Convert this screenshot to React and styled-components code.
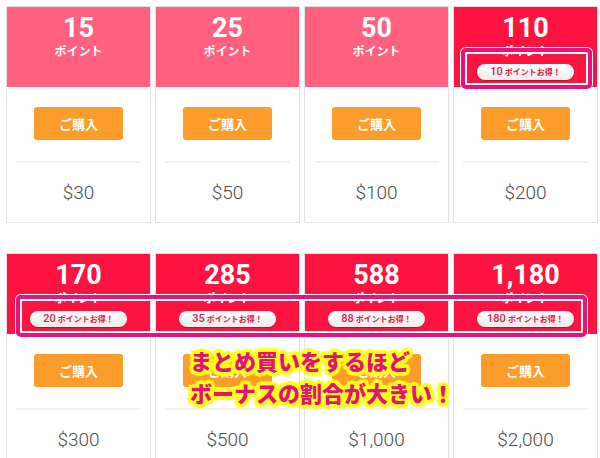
import React from 'react';
import styled, { createGlobalStyle } from 'styled-components';

const GlobalStyle = createGlobalStyle`
  body {
    margin: 0;
    background: #fff;
    font-family: Roboto, "Noto Sans CJK JP", sans-serif;
  }
`;

const Page = styled.div`
  position: relative;
  width: 600px;
  height: 458px;
  overflow: hidden;
  padding: 6px 0 0 6px;
  box-sizing: border-box;
`;

const Grid = styled.div`
  display: grid;
  grid-template-columns: repeat(4, 145px);
  column-gap: 4px;
  row-gap: 30px;
`;

const Card = styled.div`
  border: 1px solid #e2e2e2;
  background: #fff;
  display: flex;
  flex-direction: column;
  height: 215px;
`;

const Header = styled.div`
  height: 80px;
  background: ${(p) => (p.$bonus ? '#fd133f' : '#ff617f')};
  color: #fff;
  display: flex;
  flex-direction: column;
  align-items: center;
  padding-top: 6px;
  box-sizing: border-box;
`;

const Amount = styled.div`
  font-size: 27px;
  font-weight: 700;
  line-height: 30px;
`;

const Unit = styled.div`
  font-family: "Noto Sans CJK JP", sans-serif;
  font-size: 12px;
  font-weight: 700;
  line-height: 16px;
`;

const Badge = styled.div`
  margin-top: 5px;
  width: 97px;
  height: 16px;
  border-radius: 8px;
  background: linear-gradient(#ffffff, #ececec);
  box-shadow: 0 1px 1px rgba(0, 0, 0, 0.25);
  color: #d42048;
  display: flex;
  align-items: center;
  justify-content: center;
  gap: 2px;
  font-family: "Noto Sans CJK JP", sans-serif;
  font-size: 8px;
  font-weight: 700;
  line-height: 16px;
  b {
    font-family: Roboto, sans-serif;
    font-size: 11px;
    font-weight: 500;
  }
`;

const Body = styled.div`
  display: flex;
  flex-direction: column;
  align-items: center;
  padding: 20px 9px 0;
`;

const BuyButton = styled.button`
  width: 89px;
  height: 33px;
  border: none;
  border-radius: 3px;
  background: #fb9c2b;
  color: #fff;
  font-family: "Noto Sans CJK JP", sans-serif;
  font-size: 13px;
  font-weight: 700;
  padding: 0;
`;

const Divider = styled.div`
  align-self: stretch;
  height: 2px;
  background: #f1f1f1;
  margin-top: 21px;
`;

const Price = styled.div`
  margin-top: 18px;
  font-size: 19px;
  font-weight: 300;
  color: #4a4a4a;
  line-height: 24px;
`;

const Highlight = styled.div`
  position: absolute;
  left: ${(p) => p.$x}px;
  top: ${(p) => p.$y}px;
  width: ${(p) => p.$w}px;
  height: ${(p) => p.$h}px;
  box-sizing: border-box;
  border: 4px solid #e8127f;
  border-radius: 5px;
  box-shadow: inset 0 0 0 2px #fff, 0 0 0 1px #fff;
`;

const Callout = styled.div`
  position: absolute;
  left: 190px;
  top: 344px;
  font-family: "Noto Sans CJK JP", sans-serif;
  font-size: 22px;
  font-weight: 900;
  line-height: 32px;
  color: #e3127b;
  white-space: pre;
  text-shadow:
    4px 0 1px #ffff1a, -4px 0 1px #ffff1a, 0 4px 1px #ffff1a, 0 -4px 1px #ffff1a,
    3px 3px 1px #ffff1a, -3px 3px 1px #ffff1a, 3px -3px 1px #ffff1a, -3px -3px 1px #ffff1a,
    2px 0 0 #ffff1a, -2px 0 0 #ffff1a, 0 2px 0 #ffff1a, 0 -2px 0 #ffff1a,
    0 0 5px #ffff1a, 0 0 5px #ffff1a;
`;

const plans = [
  { pts: '15', price: '$30' },
  { pts: '25', price: '$50' },
  { pts: '50', price: '$100' },
  { pts: '110', price: '$200', bonus: '10' },
  { pts: '170', price: '$300', bonus: '20' },
  { pts: '285', price: '$500', bonus: '35' },
  { pts: '588', price: '$1,000', bonus: '88' },
  { pts: '1,180', price: '$2,000', bonus: '180' },
];

const App = () => {
  return (
    <Page>
      <GlobalStyle />
      <Grid>
        {plans.map((p) => (
          <Card key={p.pts}>
            <Header $bonus={!!p.bonus}>
              <Amount>{p.pts}</Amount>
              <Unit>ポイント</Unit>
              {p.bonus && (
                <Badge>
                  <b>{p.bonus}</b>ポイントお得！
                </Badge>
              )}
            </Header>
            <Body>
              <BuyButton>ご購入</BuyButton>
              <Divider />
              <Price>{p.price}</Price>
            </Body>
          </Card>
        ))}
      </Grid>
      <Highlight $x={461} $y={48} $w={131} $h={41} />
      <Highlight $x={16} $y={295} $w={571} $h={42} />
      <Callout>{'まとめ買いをするほど\nボーナスの割合が大きい！'}</Callout>
    </Page>
  );
};

export default App;
